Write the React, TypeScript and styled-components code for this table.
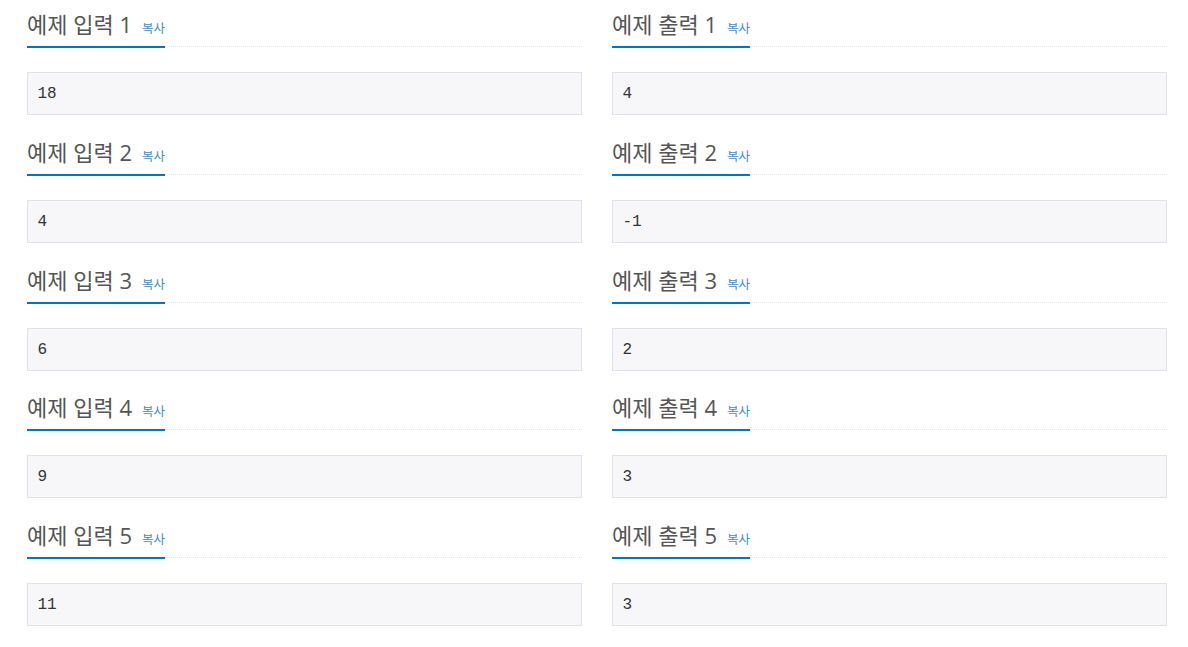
import React from "react";
import styled, { createGlobalStyle } from "styled-components";

const GlobalStyle = createGlobalStyle`
  body {
    margin: 0;
    background: #fff;
    font-family: "Open Sans", "Noto Sans CJK KR", sans-serif;
  }
`;

const samples = [
  { input: "18", output: "4" },
  { input: "4", output: "-1" },
  { input: "6", output: "2" },
  { input: "9", output: "3" },
  { input: "11", output: "3" },
];

function Sample({ title, data }: { title: string; data: string }) {
  return (
    <Section>
      <Headline>
        <Title>
          {title}
          <CopyButton>복사</CopyButton>
        </Title>
      </Headline>
      <SampleData>{data}</SampleData>
    </Section>
  );
}

export default function App() {
  return (
    <>
      <GlobalStyle />
      <Page>
        {samples.map((s, i) => (
          <React.Fragment key={i}>
            <Sample title={`예제 입력 ${i + 1}`} data={s.input} />
            <Sample title={`예제 출력 ${i + 1}`} data={s.output} />
          </React.Fragment>
        ))}
      </Page>
    </>
  );
}

const Page = styled.div`
  display: grid;
  grid-template-columns: 555px 555px;
  column-gap: 30px;
  padding: 0 21px 0 27px;
`;

const Section = styled.section`
  display: flex;
  flex-direction: column;
`;

const Headline = styled.div`
  display: flex;
  align-items: flex-end;
  margin: 12px 0 25px;
  border-bottom: 1px dotted #e5e5e5;
`;

const Title = styled.h2`
  margin: 0 0 -2px;
  padding-bottom: 9px;
  border-bottom: 2px solid #0076c0;
  font-family: "Open Sans", "Noto Sans CJK KR", sans-serif;
  font-size: 22px;
  font-weight: 400;
  line-height: 24px;
  color: #555;
  white-space: nowrap;
`;

const CopyButton = styled.button`
  margin-left: 10px;
  padding: 0;
  border: none;
  background: none;
  font-family: "Open Sans", "Noto Sans CJK KR", sans-serif;
  font-size: 12.5px;
  color: #428bca;
  cursor: pointer;
`;

const SampleData = styled.pre`
  margin: 0 0 12.75px;
  padding: 10px 9.5px 9px;
  border: 1px solid #e1e1e8;
  background: #f7f7f9;
  font-family: "Liberation Mono", monospace;
  font-size: 16px;
  line-height: 22px;
  color: #333;
`;
